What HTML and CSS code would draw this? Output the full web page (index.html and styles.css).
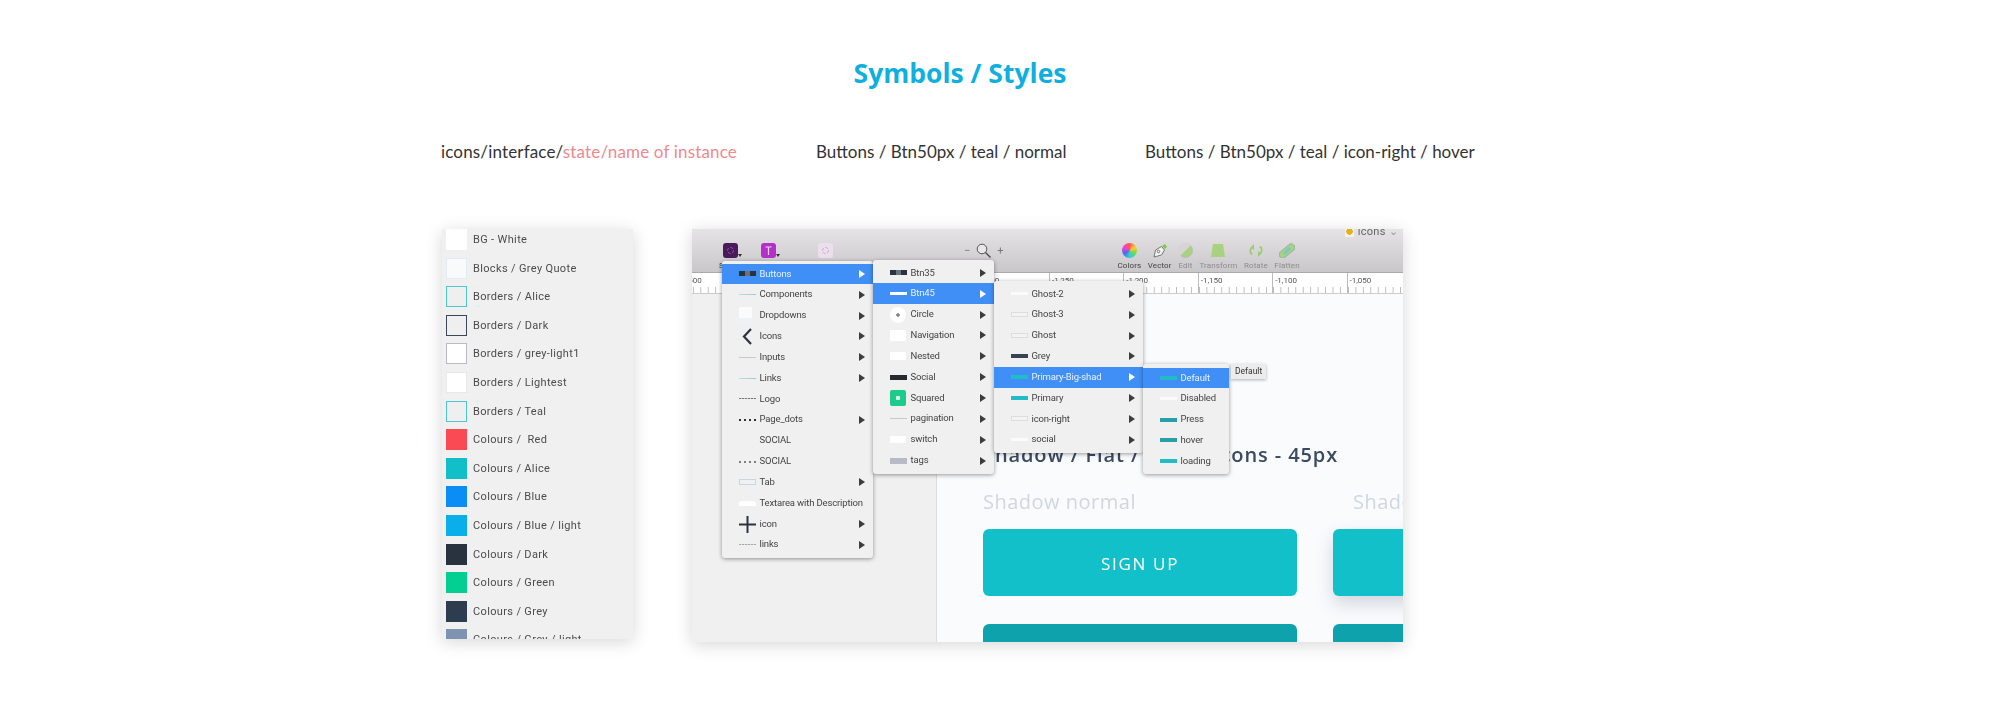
FILE: index.html
```html
<!DOCTYPE html>
<html>
<head>
    <title>Symbols / Styles</title>
    <link rel="stylesheet" href="styles.css">
</head>
<body>
<div class="page">
    <h1 class="title">Symbols / Styles</h1>

    <div class="names">
        <span class="name name-a">icons/interface/<em>state/name of instance</em></span>
        <span class="name name-b">Buttons / Btn50px / teal / normal</span>
        <span class="name">Buttons / Btn50px / teal / icon-right / hover</span>
    </div>

    <div class="shots">
        <div class="panel">
            <div class="style-row"><i class="swatch sw-white"></i>BG - White</div>
            <div class="style-row"><i class="swatch sw-quote"></i>Blocks / Grey Quote</div>
            <div class="style-row"><i class="swatch sw-alice"></i>Borders / Alice</div>
            <div class="style-row"><i class="swatch sw-dark"></i>Borders / Dark</div>
            <div class="style-row"><i class="swatch sw-grey1"></i>Borders / grey-light1</div>
            <div class="style-row"><i class="swatch sw-lightest"></i>Borders / Lightest</div>
            <div class="style-row"><i class="swatch sw-alice"></i>Borders / Teal</div>
            <div class="style-row"><i class="swatch c-red"></i>Colours / &nbsp;Red</div>
            <div class="style-row"><i class="swatch c-alice"></i>Colours / Alice</div>
            <div class="style-row"><i class="swatch c-blue"></i>Colours / Blue</div>
            <div class="style-row"><i class="swatch c-light"></i>Colours / Blue / light</div>
            <div class="style-row"><i class="swatch c-dark"></i>Colours / Dark</div>
            <div class="style-row"><i class="swatch c-green"></i>Colours / Green</div>
            <div class="style-row"><i class="swatch c-grey"></i>Colours / Grey</div>
            <div class="style-row"><i class="swatch c-greyl"></i>Colours / Grey / light</div>
        </div>

        <div class="shot">
            <div class="toolbar">
                <div class="tool tool-left tool-caret"><svg width="15" height="15"><rect width="15" height="15" rx="3" fill="#4a1a5c"/><circle cx="7.5" cy="7.5" r="3" fill="none" stroke="#8a5a98" stroke-dasharray="3 1.5"/></svg><span>Styles</span></div>
                <div class="tool tool-left tool-caret"><svg width="15" height="15"><rect width="15" height="15" rx="3" fill="#b62fcb"/><path d="M4.500 4h6M7.500 4v8" stroke="#f3d8f8" stroke-width="1.200" fill="none"/></svg></div>
                <div class="tool tool-left tool-third"><svg width="15" height="15"><rect width="15" height="15" rx="3" fill="#ecdfec"/><circle cx="7.5" cy="7.5" r="3" fill="none" stroke="#d3a5dd" stroke-dasharray="3 1.5"/></svg></div>
                <div class="zoomer">
                    <span>&minus;</span>
                    <svg width="15" height="15"><circle cx="6" cy="6" r="4.800" fill="#e8e8ea" stroke="#555"/><path d="M9.500 9.500l5 5" stroke="#444" stroke-width="1.300"/></svg>
                    <span>+</span>
                </div>
                <div class="tools-right">
                    <div class="tool"><i class="wheel"></i><span>Colors</span></div>
                    <div class="tool"><svg width="16" height="15"><path d="M2 14l1.500-7 6-3.500 3 3.500-3 5z" fill="#f2f2f2" stroke="#777"/><circle cx="6.500" cy="8.500" r="1.300" fill="none" stroke="#777"/><path d="M10 3l3-2 2 3-2 2z" fill="#7ec850"/></svg><span>Vector</span></div>
                    <div class="tool tool-off"><svg width="15" height="15"><circle cx="7.500" cy="7.500" r="7" fill="#a9d27f" stroke="#bbb"/><path d="M2 13L13 2A7 7 0 0 0 2 13z" fill="#d6d4d6"/></svg><span>Edit</span></div>
                    <div class="tool tool-off"><svg width="16" height="15"><path d="M3 1h10l2 13H1z" fill="#a9d27f"/></svg><span>Transform</span></div>
                    <div class="tool tool-off"><svg width="18" height="15"><path d="M4 12A6 6 0 0 1 5 3l2-2v6L5 5.500A4 4 0 0 0 6 11zM14 3a6 6 0 0 1-1 9l-2 2V8l2 1.500A4 4 0 0 0 12 4z" fill="#9ecb72"/></svg><span>Rotate</span></div>
                    <div class="tool tool-off"><svg width="16" height="15"><rect x="-1" y="4.500" width="18" height="7" rx="3.500" transform="rotate(-40 8 8)" fill="#a9d27f" stroke="#90b8a8"/><path d="M5 11l6-6" stroke="#7cc6c8" stroke-width="3"/></svg><span>Flatten</span></div>
                </div>
                <div class="doc-title"><i class="doc"></i>icons <b>&#8964;</b></div>
            </div>

            <div class="ruler">
                <span>-1,500</span><span>-1,450</span><span>-1,400</span><span>-1,350</span><span>-1,300</span>
                <span>-1,250</span><span>-1,200</span><span>-1,150</span><span>-1,100</span><span>-1,050</span>
            </div>

            <div class="canvas">
                <div class="side"></div>
                <div class="pane">
                    <div class="pane-head">Shadow / Flat / Ghost Icons - 45px</div>
                    <div class="pane-cols">
                        <div class="pane-col">
                            <div class="pane-label">Shadow normal</div>
                            <div class="btn">SIGN UP</div>
                            <div class="btn btn-dark"></div>
                        </div>
                        <div class="pane-col col-two">
                            <div class="pane-label">Shadow hover</div>
                            <div class="btn btn-shadow"></div>
                            <div class="btn btn-dark"></div>
                        </div>
                    </div>
                </div>
            </div>

            <ul class="menu menu-1">
                <li class="on"><i class="th th-dark"></i>Buttons<b></b></li>
                <li><i class="th th-line-teal"></i>Components<b></b></li>
                <li><i class="th th-doc"></i>Dropdowns<b></b></li>
                <li><i class="th th-svg"><svg width="17" height="17"><path d="M12 1L5 8.500 12 16" fill="none" stroke="#2b3340" stroke-width="2.200"/></svg></i>Icons<b></b></li>
                <li><i class="th th-line"></i>Inputs<b></b></li>
                <li><i class="th th-line-teal"></i>Links<b></b></li>
                <li><i class="th th-dash"></i>Logo</li>
                <li><i class="th th-dots"></i>Page_dots<b></b></li>
                <li><i class="th"></i>SOCIAL</li>
                <li><i class="th th-dots th-fade"></i>SOCIAL</li>
                <li><i class="th th-tab"></i>Tab<b></b></li>
                <li><i class="th th-area"></i>Textarea with Description</li>
                <li><i class="th th-svg"><svg width="17" height="17"><path d="M0 8.500h17M8.500 0v17" fill="none" stroke="#2b3340" stroke-width="2"/></svg></i>icon<b></b></li>
                <li><i class="th th-dash th-fade"></i>links<b></b></li>
            </ul>

            <ul class="menu menu-2">
                <li><i class="th th-dark"></i>Btn35<b></b></li>
                <li class="on"><i class="th th-white"></i>Btn45<b></b></li>
                <li><i class="th th-circle"></i>Circle<b></b></li>
                <li><i class="th th-nav"></i>Navigation<b></b></li>
                <li><i class="th th-nest"></i>Nested<b></b></li>
                <li><i class="th th-social"></i>Social<b></b></li>
                <li><i class="th th-green"></i>Squared<b></b></li>
                <li><i class="th th-line"></i>pagination<b></b></li>
                <li><i class="th th-switch"></i>switch<b></b></li>
                <li><i class="th th-tags"></i>tags<b></b></li>
            </ul>

            <ul class="menu menu-3">
                <li><i class="th th-white-line"></i>Ghost-2<b></b></li>
                <li><i class="th th-ghost"></i>Ghost-3<b></b></li>
                <li><i class="th th-ghost"></i>Ghost<b></b></li>
                <li><i class="th th-grey"></i>Grey<b></b></li>
                <li class="on"><i class="th th-teal"></i>Primary-Big-shad<b></b></li>
                <li><i class="th th-teal"></i>Primary<b></b></li>
                <li><i class="th th-ghost"></i>icon-right<b></b></li>
                <li><i class="th th-white-line"></i>social<b></b></li>
            </ul>

            <ul class="menu menu-4">
                <li class="on"><i class="th th-teal"></i>Default</li>
                <li><i class="th th-white-line"></i>Disabled</li>
                <li><i class="th th-press"></i>Press</li>
                <li><i class="th th-press"></i>hover</li>
                <li><i class="th th-teal"></i>loading</li>
            </ul>

            <div class="tip">Default</div>
        </div>
    </div>
</div>
</body>
</html>
```

FILE: styles.css
```css
body {
    margin: 0;
    background: #fff;
    font-family: Roboto, "Liberation Sans", sans-serif;
}
.page {
    width: 1920px;
    height: 710px;
    overflow: hidden;
}
.title {
    margin: 0;
    padding-top: 55px;
    font: 700 26.5px/36px "Open Sans", sans-serif;
    color: #0fb0e0;
    text-align: center;
}
.names {
    display: flex;
    margin-top: 49px;
    padding-left: 441px;
    font: 400 17px/24px Lato, sans-serif;
    color: #333;
}
.name {
    white-space: nowrap;
}
.name em {
    font-style: normal;
    color: #ee8a8f;
}
.name-a {
    width: 375px;
    letter-spacing: 0.16px;
}
.name-b {
    width: 329px;
}
.shots {
    display: flex;
    margin-top: 65px;
    padding-left: 442px;
}

/* left list of styles */
.panel {
    width: 191px;
    height: 410px;
    overflow: hidden;
    background: #f0f0f0;
    box-shadow: 0 3px 16px rgba(0,0,0,0.16);
    filter: blur(0.4px);
}
.style-row {
    display: flex;
    height: 28.6px;
    padding-left: 4px;
    font-size: 11px;
    line-height: 21px;
    letter-spacing: 0.35px;
    color: #4c4c4c;
    white-space: nowrap;
}
.swatch {
    flex: none;
    width: 21px;
    height: 21px;
    margin-right: 6px;
    box-sizing: border-box;
}
.sw-white { background: #fff; }
.sw-quote { background: #f8fafc; border: 1px solid #e6ebf2; }
.sw-alice { background: #efefef; border: 1px solid #4fc6cc; }
.sw-dark { background: #efefef; border: 1px solid #3b4656; }
.sw-grey1 { background: #fff; border: 1px solid #b9bcc4; }
.sw-lightest { background: #fff; border: 1px solid #e8e8ec; }
.c-red { background: #fa4a53; }
.c-alice { background: #12bfc9; }
.c-blue { background: #0a8df5; }
.c-light { background: #0aaeea; }
.c-dark { background: #29323f; }
.c-green { background: #04cf92; }
.c-grey { background: #2d3c4e; }
.c-greyl { background: #7f92b0; }

/* sketch window */
.shot {
    position: relative;
    width: 711px;
    height: 413px;
    margin-left: 59px;
    overflow: hidden;
    background: #f0f0f0;
    box-shadow: 0 3px 16px rgba(0,0,0,0.16);
    filter: blur(0.4px);
}
.toolbar {
    display: flex;
    align-items: flex-start;
    height: 44px;
    box-sizing: border-box;
    padding: 14px 0 0 23px;
    background: linear-gradient(#e5e3e5, #c9c7c9);
    border-bottom: 1px solid #aaa;
}
.toolbar > * {
    flex: none;
}
.tool {
    position: relative;
    display: flex;
    flex-direction: column;
    align-items: center;
    font-size: 8px;
    line-height: 10px;
    letter-spacing: 0.1px;
    color: #444;
}
.tool span {
    margin-top: 3px;
}
.tool-left {
    width: 30px;
    margin-right: 8px;
}
.tool-caret::after {
    content: "";
    position: absolute;
    left: 23px;
    top: 11px;
    border-top: 3px solid #333;
    border-left: 2.5px solid transparent;
    border-right: 2.5px solid transparent;
}
.tool-third {
    margin-left: 19px;
}
.tool-off {
    color: #8d8d8d;
}
.wheel {
    width: 15px;
    height: 15px;
    border-radius: 50%;
    background: conic-gradient(#f55, #fc3, #6d5, #3cd, #56e, #e4c, #f55);
}
.zoomer {
    display: flex;
    align-items: center;
    gap: 6px;
    margin-left: 116px;
    font-size: 11px;
    line-height: 15px;
    color: #777;
}
.tools-right {
    display: flex;
    gap: 6.5px;
    margin-left: 114px;
}
.doc-title {
    display: flex;
    align-items: center;
    margin: -17px 0 0 45px;
    font-size: 11px;
    line-height: 12px;
    letter-spacing: 0.3px;
    color: #666;
    white-space: nowrap;
}
.doc-title b {
    margin-left: 3px;
    font-weight: 400;
    color: #999;
}
.doc {
    width: 9px;
    height: 10px;
    margin-right: 4px;
    background: radial-gradient(circle at 50% 45%, #e3b020 0 3px, #f6f1e0 3.5px);
}
.ruler {
    display: flex;
    height: 21px;
    margin-left: -15px;
    box-sizing: border-box;
    background: #fff;
    border-bottom: 1px solid #ccc;
}
.ruler span {
    flex: none;
    width: 74.4px;
    box-sizing: border-box;
    padding: 2px 0 0 2px;
    font-size: 8px;
    line-height: 11px;
    color: #555;
    border-left: 1px solid #bbb;
    background: linear-gradient(90deg, #bbb 1px, transparent 1px) 0 100% / 7.44px 6px repeat-x;
}
.canvas {
    display: flex;
    height: 348px;
}
.side {
    width: 245px;
    flex: none;
    box-sizing: border-box;
    background: #f0f0f0;
    border-right: 1px solid #ddd;
}
.pane {
    flex: 1;
    min-width: 0;
    padding: 147px 0 0 46px;
    overflow: hidden;
    background: #fafbfd;
}
.pane-head {
    font: 600 20px/28px "Open Sans", sans-serif;
    letter-spacing: 0.9px;
    color: #3a4a63;
    white-space: nowrap;
}
.pane-cols {
    display: flex;
    gap: 36px;
    margin-top: 20px;
}
.pane-col {
    flex: none;
    width: 314px;
}
.pane-label {
    font: 400 20px/26px "Open Sans", sans-serif;
    letter-spacing: 0.5px;
    color: #d0d6e2;
    white-space: nowrap;
}
.col-two .pane-label {
    padding-left: 20px;
}
.btn {
    height: 67px;
    margin: 14px 0 28px;
    border-radius: 6px;
    background: #12c0ca;
    font: 500 17px/70px "Open Sans", sans-serif;
    letter-spacing: 1.7px;
    color: #fff;
    text-align: center;
}
.btn-dark {
    margin-top: 0;
    background: #0ea3ac;
}
.btn-shadow {
    box-shadow: 0 8px 18px rgba(60,70,110,0.2);
}

/* native menus */
.menu {
    position: absolute;
    margin: 0;
    padding: 2.5px 0 2.6px;
    list-style: none;
    background: #f0f0f0;
    border-radius: 3px;
    box-shadow: 0 1px 4px rgba(0,0,0,0.4);
    font-size: 9.5px;
    letter-spacing: -0.15px;
    color: #444;
}
.menu li {
    display: flex;
    align-items: center;
    height: 20.85px;
    padding: 0 8px 0 17px;
    line-height: 20.85px;
    white-space: nowrap;
}
.menu li.on {
    background: #3f8ff7;
    color: #e8f1ff;
}
.menu b {
    margin-left: auto;
    border-left: 6px solid #3c3c3c;
    border-top: 4px solid transparent;
    border-bottom: 4px solid transparent;
}
.menu .on b {
    border-left-color: #fff;
}
.menu-1 { left: 30px; top: 32px; width: 151px; }
.menu-2 { left: 181px; top: 31px; width: 121px; }
.menu-3 { left: 302px; top: 52px; width: 149px; }
.menu-4 { left: 451px; top: 135px; width: 86px; padding-top: 3.5px; }
.tip {
    position: absolute;
    left: 539px;
    top: 135px;
    padding: 0 4px;
    font-size: 8.5px;
    line-height: 15px;
    color: #333;
    background: #ececec;
    box-shadow: 0 1px 3px rgba(0,0,0,0.3);
}

/* little layer previews in the menus */
.th {
    position: relative;
    flex: none;
    display: block;
    width: 17px;
    height: 1px;
    margin-right: 3.5px;
}
.th-dark { height: 5px; background: linear-gradient(90deg, #2b3340 35%, #69737f 35% 65%, #2b3340 65%); }
.th-line { background: #c9c9c9; }
.th-line-teal { background: linear-gradient(90deg, #c8d8d8, #8fd0d0); }
.th-doc { width: 13px; height: 17px; margin-right: 7.5px; background: #fbfbfb; box-shadow: inset 0 -6px 0 #eef2f6; }
.th-svg { height: 17px; }
.th-dash { height: 1px; background: repeating-linear-gradient(90deg, #777 0 2px, #ccc 2px 3px); }
.th-dots { height: 2px; background: repeating-linear-gradient(90deg, #333 0 2px, transparent 2px 5px); }
.th-fade { opacity: 0.6; }
.th-tab { height: 6px; background: #eef2f6; border: 1px solid #cdd6e0; box-sizing: border-box; }
.th-area { height: 5px; background: #fff; border-radius: 3px 3px 0 0; }
.th-white { height: 3px; background: #fff; }
.th-circle { width: 16px; height: 16px; margin-right: 4.5px; border-radius: 50%; background: radial-gradient(circle, #888 0 1.5px, #fff 2px); }
.th-nav { width: 16px; height: 11px; margin-right: 4.5px; background: #fff; }
.th-nest { width: 16px; height: 8px; margin-right: 4.5px; background: #fff; }
.th-social { height: 5px; background: #262a30; }
.th-green { width: 16px; height: 16px; margin-right: 4.5px; border-radius: 2px; background: radial-gradient(circle, #d8f5ea 0 2px, #1ecb8e 2.5px); }
.th-switch { width: 16px; height: 7px; margin-right: 4.5px; background: #fff; }
.th-tags { height: 6px; background: #b7bbc5; }
.th-white-line { height: 3px; background: #fbfbfb; }
.th-ghost { height: 5px; background: #f3f3f3; border: 1px solid #ddd; box-sizing: border-box; }
.th-grey { height: 4px; background: #39434f; }
.th-teal { height: 4px; background: #21bcc6; }
.th-press { height: 4px; background: #2a9fa6; }
```
